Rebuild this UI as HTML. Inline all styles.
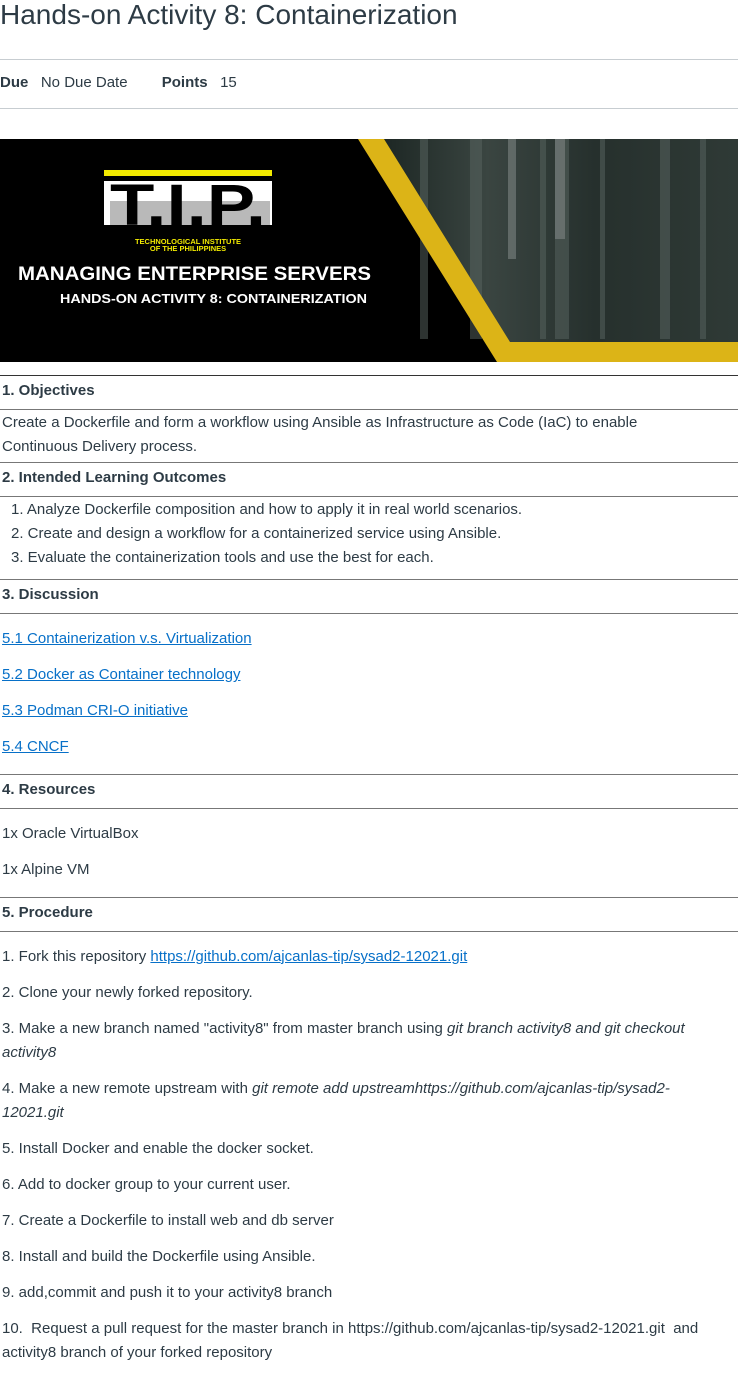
<!DOCTYPE html>
<html><head><meta charset="utf-8"><style>
html,body{margin:0;padding:0;background:#fff;}
body{width:738px;height:1378px;position:relative;overflow:hidden;font-family:"Liberation Sans",Arial,sans-serif;color:#2d3b45;}
.a{position:absolute;white-space:nowrap;font-size:15px;line-height:18px;}
.b{font-weight:bold;}
.l{position:absolute;left:0;width:738px;height:1px;background:#777;}
.h{position:absolute;left:0;width:738px;height:1px;background:#c7cdd1;}
a{color:#0770c8;text-decoration:underline;}
i{font-style:italic;}
</style></head><body>
<div class="a" style="left:0;top:-1px;font-size:28px;line-height:32px;">Hands-on Activity 8: Containerization</div>
<div class="h" style="top:59px"></div>
<div class="a" style="left:0;top:74px;"><span class="b">Due</span>&nbsp;&nbsp; No Due Date <span style="display:inline-block;width:30px"></span><span class="b">Points</span>&nbsp;&nbsp; 15</div>
<div class="h" style="top:108px"></div>

<svg style="position:absolute;left:0;top:139px" width="738" height="223" viewBox="0 0 738 223">
<defs><linearGradient id="g" x1="0" x2="1"><stop offset="0" stop-color="#1c2623"/><stop offset="0.3" stop-color="#3a4541"/><stop offset="0.6" stop-color="#26302d"/><stop offset="1" stop-color="#2f3a36"/></linearGradient></defs>
<rect width="738" height="223" fill="#000"/>
<polygon points="380,0 738,0 738,203 505,203" fill="url(#g)"/>
<g fill="#5a6662" opacity="0.5"><rect x="420" y="0" width="8" height="200"/><rect x="470" y="0" width="12" height="200"/><rect x="540" y="0" width="6" height="200"/><rect x="555" y="0" width="14" height="200"/><rect x="600" y="0" width="5" height="200"/><rect x="660" y="0" width="10" height="200"/><rect x="700" y="0" width="6" height="200"/></g>
<rect x="508" y="0" width="8" height="120" fill="#8a9290" opacity="0.5"/>
<rect x="555" y="0" width="10" height="100" fill="#9aa19f" opacity="0.4"/>
<polygon points="358,0 384,0 510,203 738,203 738,223 497,223" fill="#dcb417"/>
<rect x="104" y="31" width="168" height="6" fill="#f2ea00"/>
<rect x="104" y="42" width="168" height="44" fill="#fff"/>
<rect x="110" y="62" width="160" height="24" fill="#b9b9b9"/>
<text x="188" y="86" text-anchor="middle" font-family="Liberation Sans" font-weight="bold" font-size="58" fill="#000" textLength="156" lengthAdjust="spacingAndGlyphs">T.I.P.</text>
<text x="188" y="105" text-anchor="middle" font-family="Liberation Sans" font-weight="bold" font-size="7.5" fill="#f2ea00">TECHNOLOGICAL INSTITUTE</text>
<text x="188" y="112" text-anchor="middle" font-family="Liberation Sans" font-weight="bold" font-size="7.5" fill="#f2ea00">OF THE PHILIPPINES</text>
<text x="18" y="141" font-family="Liberation Sans" font-weight="bold" font-size="19" fill="#fff" textLength="353" lengthAdjust="spacingAndGlyphs">MANAGING ENTERPRISE SERVERS</text>
<text x="60" y="164" font-family="Liberation Sans" font-weight="bold" font-size="13" fill="#fff" textLength="307" lengthAdjust="spacingAndGlyphs">HANDS-ON ACTIVITY 8: CONTAINERIZATION</text>
</svg>

<div class="l" style="top:375px;background:#333"></div>
<div class="a b" style="left:2px;top:382px">1. Objectives</div>
<div class="l" style="top:409px"></div>
<div class="a" style="left:2px;top:414px">Create a Dockerfile and form a workflow using Ansible as Infrastructure as Code (IaC) to enable</div>
<div class="a" style="left:2px;top:438px">Continuous Delivery process.</div>
<div class="l" style="top:462px"></div>
<div class="a b" style="left:2px;top:469px">2. Intended Learning Outcomes</div>
<div class="l" style="top:496px"></div>
<div class="a" style="left:11px;top:501px">1. Analyze Dockerfile composition and how to apply it in real world scenarios.</div>
<div class="a" style="left:11px;top:525px">2. Create and design a workflow for a containerized service using Ansible.</div>
<div class="a" style="left:11px;top:549px">3. Evaluate the containerization tools and use the best for each.</div>
<div class="l" style="top:579px"></div>
<div class="a b" style="left:2px;top:586px">3. Discussion</div>
<div class="l" style="top:613px"></div>
<div class="a" style="left:2px;top:630px"><a>5.1 Containerization v.s. Virtualization</a></div>
<div class="a" style="left:2px;top:666px"><a>5.2 Docker as Container technology</a></div>
<div class="a" style="left:2px;top:702px"><a>5.3 Podman CRI-O initiative</a></div>
<div class="a" style="left:2px;top:738px"><a>5.4 CNCF</a></div>
<div class="l" style="top:774px"></div>
<div class="a b" style="left:2px;top:781px">4. Resources</div>
<div class="l" style="top:808px"></div>
<div class="a" style="left:2px;top:825px">1x Oracle VirtualBox</div>
<div class="a" style="left:2px;top:861px">1x Alpine VM</div>
<div class="l" style="top:897px"></div>
<div class="a b" style="left:2px;top:904px">5. Procedure</div>
<div class="l" style="top:931px"></div>
<div class="a" style="left:2px;top:948px">1. Fork this repository <a>https://github.com/ajcanlas-tip/sysad2-12021.git</a></div>
<div class="a" style="left:2px;top:984px">2. Clone your newly forked repository.</div>
<div class="a" style="left:2px;top:1020px">3. Make a new branch named "activity8" from master branch using <i>git branch activity8 and git checkout</i></div>
<div class="a" style="left:2px;top:1044px"><i>activity8</i></div>
<div class="a" style="left:2px;top:1080px">4. Make a new remote upstream with <i>git remote add upstreamhttps://github.com/ajcanlas-tip/sysad2-</i></div>
<div class="a" style="left:2px;top:1104px"><i>12021.git</i></div>
<div class="a" style="left:2px;top:1140px">5. Install Docker and enable the docker socket.</div>
<div class="a" style="left:2px;top:1176px">6. Add to docker group to your current user.</div>
<div class="a" style="left:2px;top:1212px">7. Create a Dockerfile to install web and db server</div>
<div class="a" style="left:2px;top:1248px">8. Install and build the Dockerfile using Ansible.</div>
<div class="a" style="left:2px;top:1284px">9. add,commit and push it to your activity8 branch</div>
<div class="a" style="left:2px;top:1320px">10.&nbsp; Request a pull request for the master branch in https://github.com/ajcanlas-tip/sysad2-12021.git&nbsp; and</div>
<div class="a" style="left:2px;top:1344px">activity8 branch of your forked repository</div>
</body></html>
